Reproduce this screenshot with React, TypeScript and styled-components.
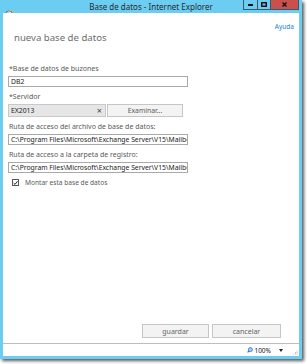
import styled, { createGlobalStyle } from 'styled-components';

const GlobalStyle = createGlobalStyle`
  html, body {
    margin: 0;
    padding: 0;
    background: #fff;
  }
  body {
    font-family: 'Noto Sans', 'DejaVu Sans', sans-serif;
  }
  * {
    box-sizing: border-box;
  }
`;

const Screen = styled.div`
  width: 307px;
  height: 364px;
  background: #fff;
`;

const Window = styled.div`
  width: 302px;
  height: 359px;
  display: flex;
  flex-direction: column;
  padding: 0 3px 3px;
  background: #6ccdf3;
  box-shadow: 2px 2px 3px rgba(0, 0, 0, 0.65);
`;

const TitleBar = styled.div`
  height: 13px;
  display: grid;
  grid-template-columns: 1fr auto 1fr;
  align-items: start;
`;

const TitleIcon = styled.div`
  width: 10px;
  height: 10px;
  margin: 2px 0 0 1px;
`;

const TitleText = styled.div`
  font-size: 8px;
  line-height: 14px;
  color: #2a2a2a;
  white-space: nowrap;
`;

const Controls = styled.div`
  display: flex;
  justify-content: flex-end;
`;

const ControlButton = styled.div<{ $w: number; $close?: boolean }>`
  width: ${(p) => p.$w}px;
  height: 10px;
  display: flex;
  align-items: center;
  justify-content: center;
  background: ${(p) => (p.$close ? '#c9504d' : '#6ccdf3')};
  border: 1px solid #3a5a6a;
  border-top: none;
  margin-left: -1px;
`;

const Body = styled.div`
  flex: 1;
  display: flex;
  flex-direction: column;
  background: #fff;
`;

const Header = styled.div`
  display: flex;
  justify-content: space-between;
  align-items: flex-start;
  padding: 10px 5px 0 11px;
`;

const Heading = styled.div`
  margin-top: 7px;
  font-size: 9.6px;
  line-height: 15px;
  color: #6e6e6e;
`;

const HelpLink = styled.a`
  font-size: 6.5px;
  line-height: 8px;
  color: #1e7fd0;
  text-decoration: none;
`;

const Form = styled.div`
  display: flex;
  flex-direction: column;
  gap: 6px;
  width: 190px;
  margin-top: 20px;
  padding: 0 0 0 5px;
`;

const Field = styled.div`
  display: flex;
  flex-direction: column;
  width: 180px;
`;

const Label = styled.div`
  font-size: 7px;
  line-height: 8px;
  margin: 0 0 3px 1px;
  color: #595959;
  white-space: nowrap;
`;

const TextBox = styled.div`
  height: 11px;
  padding: 0 2px;
  border: 1px solid #a9a9a9;
  font-size: 6.8px;
  line-height: 9px;
  color: #222;
  white-space: nowrap;
  overflow: hidden;
`;

const ServerRow = styled.div`
  display: flex;
  gap: 1px;
  height: 13px;
`;

const ServerBox = styled.div`
  width: 98px;
  display: flex;
  align-items: center;
  justify-content: space-between;
  padding: 0 3px 0 2px;
  background: #e6e6e6;
  border: 1px solid #c9c9c9;
  font-size: 6.8px;
  color: #222;
`;

const ClearMark = styled.span`
  font-size: 9px;
  line-height: 9px;
  color: #444;
`;

const PlainButton = styled.div<{ $w: number }>`
  width: ${(p) => p.$w}px;
  display: flex;
  align-items: center;
  justify-content: center;
  background: #f3f3f3;
  border: 1px solid #c6c6c6;
  font-size: 6.8px;
  color: #5a5a5a;
`;

const CheckRow = styled.div`
  display: flex;
  align-items: center;
  gap: 6px;
  margin: -1px 0 0 4px;
  font-size: 6.6px;
  color: #595959;
`;

const CheckBox = styled.div`
  width: 7px;
  height: 7px;
  border: 1px solid #555;
  background: #fff;
  display: flex;
  align-items: center;
  justify-content: center;
`;

const Actions = styled.div`
  margin-top: auto;
  display: flex;
  justify-content: flex-end;
  gap: 3px;
  padding: 0 18px 5px 0;
`;

const ActionButton = styled(PlainButton)`
  height: 14px;
  font-size: 7px;
  color: #666;
`;

const StatusBar = styled.div`
  height: 13px;
  display: flex;
  align-items: center;
  justify-content: flex-end;
  border-top: 1px solid #bdbdbd;
  padding-right: 1px;
  font-size: 6.5px;
  color: #222;
`;

const Zoom = styled.div`
  display: flex;
  align-items: center;
  gap: 1px;
  margin-right: 8px;
`;

const Arrow = styled.div`
  width: 0;
  height: 0;
  border-left: 2.5px solid transparent;
  border-right: 2.5px solid transparent;
  border-top: 3px solid #222;
  margin-right: 10px;
`;

const Grip = styled.svg`
  align-self: flex-end;
  margin-bottom: 1px;
`;

const IeLogo = () => (
  <svg width="10" height="10" viewBox="0 0 10 10">
    <circle cx="5" cy="5.2" r="3.8" fill="#2a8ee0" />
    <path d="M2.6 5.1h4.8c0-1.6-1-2.5-2.4-2.5S2.6 3.6 2.6 5.1z" fill="#fff" />
    <path d="M3.7 4.4h2.6c-.1-.6-.6-.9-1.3-.9s-1.2.3-1.3.9z" fill="#2a8ee0" />
    <path d="M3.6 5.8c.2.8.8 1.2 1.5 1.2.6 0 1-.2 1.3-.6h1.1C7 7.5 6.2 8 5.1 8 3.7 8 2.6 7.1 2.6 5.8z" fill="#fff" />
    <ellipse cx="5" cy="5" rx="5" ry="2.2" transform="rotate(-35 5 5)" fill="none" stroke="#f2b632" strokeWidth="0.9" />
  </svg>
);

const ZoomIcon = () => (
  <svg width="6" height="6" viewBox="0 0 6 6">
    <circle cx="3.4" cy="2.6" r="2" fill="#9fd0f5" stroke="#2a6ebd" strokeWidth="0.8" />
    <path d="M2 4L0.6 5.4" stroke="#2a6ebd" strokeWidth="1.1" />
  </svg>
);

const Tick = () => (
  <svg width="6" height="6" viewBox="0 0 6 6">
    <path d="M0.8 3.1L2.4 4.7L5.4 0.9" fill="none" stroke="#222" strokeWidth="1.2" />
  </svg>
);

export default function App() {
  return (
    <Screen>
      <GlobalStyle />
      <Window>
        <TitleBar>
          <TitleIcon>
            <IeLogo />
          </TitleIcon>
          <TitleText>Base de datos - Internet Explorer</TitleText>
          <Controls>
            <ControlButton $w={15}>
              <svg width="5" height="2"><rect width="5" height="2" fill="#111" /></svg>
            </ControlButton>
            <ControlButton $w={14}>
              <svg width="6" height="5"><rect x="0.75" y="0.75" width="4.5" height="3.5" fill="none" stroke="#111" strokeWidth="1.5" /></svg>
            </ControlButton>
            <ControlButton $w={29} $close>
              <svg width="5" height="5"><path d="M0.5 0.5L4.5 4.5M4.5 0.5L0.5 4.5" stroke="#111" strokeWidth="1.3" /></svg>
            </ControlButton>
          </Controls>
        </TitleBar>
        <Body>
          <Header>
            <Heading>nueva base de datos</Heading>
            <HelpLink href="#">Ayuda</HelpLink>
          </Header>
          <Form>
            <Field>
              <Label>*Base de datos de buzones</Label>
              <TextBox>DB2</TextBox>
            </Field>
            <Field>
              <Label>*Servidor</Label>
              <ServerRow>
                <ServerBox>
                  EX2013
                  <ClearMark>×</ClearMark>
                </ServerBox>
                <PlainButton $w={76}>Examinar...</PlainButton>
              </ServerRow>
            </Field>
            <Field>
              <Label>Ruta de acceso del archivo de base de datos:</Label>
              <TextBox>C:\Program Files\Microsoft\Exchange Server\V15\Mailbox</TextBox>
            </Field>
            <Field>
              <Label>Ruta de acceso a la carpeta de registro:</Label>
              <TextBox>C:\Program Files\Microsoft\Exchange Server\V15\Mailbox</TextBox>
            </Field>
            <CheckRow>
              <CheckBox>
                <Tick />
              </CheckBox>
              Montar esta base de datos
            </CheckRow>
          </Form>
          <Actions>
            <ActionButton $w={67}>guardar</ActionButton>
            <ActionButton $w={69}>cancelar</ActionButton>
          </Actions>
          <StatusBar>
            <Zoom>
              <ZoomIcon />
              100%
            </Zoom>
            <Arrow />
            <Grip width="5" height="5" viewBox="0 0 5 5">
              <rect x="3.5" y="0.5" width="1" height="1" fill="#bbb" />
              <rect x="2" y="2" width="1" height="1" fill="#bbb" />
              <rect x="3.5" y="2" width="1" height="1" fill="#bbb" />
              <rect x="0.5" y="3.5" width="1" height="1" fill="#bbb" />
              <rect x="2" y="3.5" width="1" height="1" fill="#bbb" />
              <rect x="3.5" y="3.5" width="1" height="1" fill="#bbb" />
            </Grip>
          </StatusBar>
        </Body>
      </Window>
    </Screen>
  );
}
